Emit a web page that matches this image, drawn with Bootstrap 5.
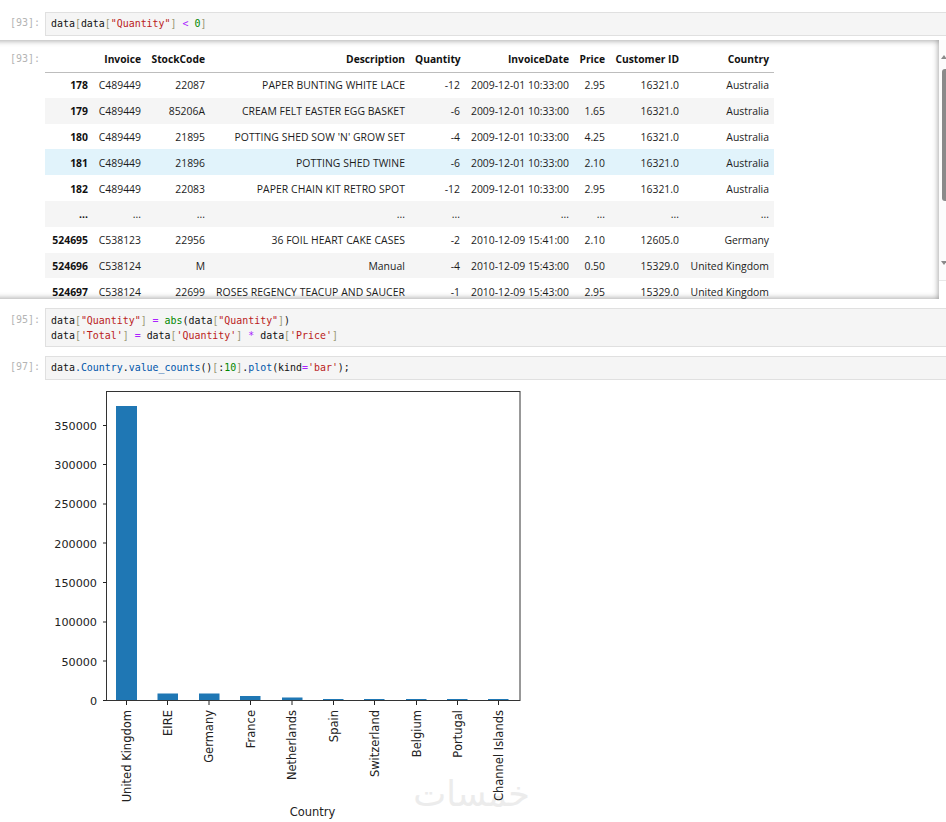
<!DOCTYPE html>
<html lang="en">
<head>
<meta charset="utf-8">
<title>Notebook</title>
<link href="https://cdn.jsdelivr.net/npm/bootstrap@5.3.0/dist/css/bootstrap.min.css" rel="stylesheet">
<style>
html,body{margin:0;height:822px;overflow:hidden;background:#fff}
.nb-page{width:946px;padding-top:12px}
.nb-cell{display:flex;align-items:flex-start}
.nb-prompt{width:45px;flex:none;padding:3px 5px 0 0;text-align:right;font:10px/16px "DejaVu Sans Mono",monospace;color:#b4b4b4;white-space:pre}
.nb-code{flex:1 1 auto;min-width:0;background:#f5f5f5;border:1px solid #e0e0e0;border-right:0;padding:3px 5px;font:9.93px/16px "DejaVu Sans Mono",monospace;color:#111;white-space:pre}
.nb-code-tall{padding:4px 5px 3px;line-height:15px}
.nb-tall-prompt{padding-top:4px}
.nb-mt1{margin-top:9px}
.nb-mt2{margin-top:9px}
.t-str{color:#ba2121}.t-op{color:#a2f}.t-num{color:#080}.t-brk{color:#997}.t-attr{color:#05a}.t-bi{color:#080}
.nb-output{display:flex;margin:4px 0 0 -10px;width:956px;height:259px}
.nb-scroll{width:949px;flex:none;height:259px;overflow:hidden;background:#fff;padding:6px 0 0 55px;position:relative}
.nb-scroll::after{content:"";position:absolute;inset:0;box-shadow:inset 0 0 6px rgba(0,0,0,.45);pointer-events:none}
.nb-scroll .nb-oprompt{position:absolute;left:0;top:8px;width:55px}
.nb-bar{flex:1 1 auto;display:flex;flex-direction:column;align-items:flex-end;height:241px;border-bottom:1px solid #e8e8e8;background:#fcfcfc;position:relative}
.nb-thumb{width:4px;height:132px;margin-top:29px;background:#8a8a8a;border-radius:3px 0 0 3px}
.nb-arrow-up{position:absolute;right:-1px;top:15px;width:0;height:0;border-left:3px solid transparent;border-right:3px solid transparent;border-bottom:4px solid #8a8a8a}
.nb-arrow-down{position:absolute;right:-1px;top:221px;width:0;height:0;border-left:3px solid transparent;border-right:3px solid transparent;border-top:4px solid #8a8a8a}
.nb-table{width:729px;table-layout:fixed;margin:0;font:10.4px/15px "Open Sans",sans-serif;color:#1c1c1c;--bs-table-bg:transparent;border-collapse:collapse}
.nb-table th,.nb-table td{padding:0 5px;text-align:right;white-space:nowrap;border:0;height:26px;overflow:hidden;vertical-align:middle;box-shadow:none}
.nb-table th{font-weight:700;color:#111}
.nb-table thead th{border-bottom:1px solid #bdbdbd;font-size:10.25px;padding-top:1px}
.nb-table tbody td:nth-child(4){letter-spacing:.06px}
.nb-table tr.nb-shade>*{background:#f5f5f5}
.nb-table tr.nb-hover>*{background:#e1f3fb}
.nb-table tr.nb-short>*{height:25px}
.nb-table tr.nb-low>*{padding-top:2px}
.c0{width:48px}.c1{width:53px}.c2{width:64px}.c3{width:200px}.c4{width:55px}.c5{width:109px}.c6{width:36px}.c7{width:74px}.c8{width:90px}
.nb-chart{display:block;margin-top:5px;width:946px;height:442px}
.nb-chart text{font-family:"DejaVu Sans",sans-serif;font-size:11.2px;fill:#222}
.nb-chart .nb-xlabels text{font-size:11.5px}
.nb-chart text.nb-name{font-size:11.5px}
.nb-chart text.nb-wm{font-size:35px;fill:#ececec}
</style>
</head>
<body>
<main class="nb-page">
  <div class="nb-cell">
    <div class="nb-prompt">[93]:</div>
    <div class="nb-code">data<span class="t-brk">[</span>data<span class="t-brk">[</span><span class="t-str">"Quantity"</span><span class="t-brk">]</span> <span class="t-op">&lt;</span> <span class="t-num">0</span><span class="t-brk">]</span></div>
  </div>
  <div class="nb-output">
    <div class="nb-scroll">
      <div class="nb-prompt nb-oprompt">[93]:</div>
      <table class="table nb-table">
        <colgroup><col class="c0"><col class="c1"><col class="c2"><col class="c3"><col class="c4"><col class="c5"><col class="c6"><col class="c7"><col class="c8"></colgroup>
        <thead><tr><th></th><th>Invoice</th><th>StockCode</th><th>Description</th><th>Quantity</th><th>InvoiceDate</th><th>Price</th><th>Customer ID</th><th>Country</th></tr></thead>
        <tbody>
          <tr><th>178</th><td>C489449</td><td>22087</td><td>PAPER BUNTING WHITE LACE</td><td>-12</td><td>2009-12-01 10:33:00</td><td>2.95</td><td>16321.0</td><td>Australia</td></tr>
          <tr class="nb-shade"><th>179</th><td>C489449</td><td>85206A</td><td>CREAM FELT EASTER EGG BASKET</td><td>-6</td><td>2009-12-01 10:33:00</td><td>1.65</td><td>16321.0</td><td>Australia</td></tr>
          <tr class="nb-short nb-low"><th>180</th><td>C489449</td><td>21895</td><td>POTTING SHED SOW 'N' GROW SET</td><td>-4</td><td>2009-12-01 10:33:00</td><td>4.25</td><td>16321.0</td><td>Australia</td></tr>
          <tr class="nb-hover nb-low"><th>181</th><td>C489449</td><td>21896</td><td>POTTING SHED TWINE</td><td>-6</td><td>2009-12-01 10:33:00</td><td>2.10</td><td>16321.0</td><td>Australia</td></tr>
          <tr class="nb-low"><th>182</th><td>C489449</td><td>22083</td><td>PAPER CHAIN KIT RETRO SPOT</td><td>-12</td><td>2009-12-01 10:33:00</td><td>2.95</td><td>16321.0</td><td>Australia</td></tr>
          <tr class="nb-shade"><th>...</th><td>...</td><td>...</td><td>...</td><td>...</td><td>...</td><td>...</td><td>...</td><td>...</td></tr>
          <tr><th>524695</th><td>C538123</td><td>22956</td><td>36 FOIL HEART CAKE CASES</td><td>-2</td><td>2010-12-09 15:41:00</td><td>2.10</td><td>12605.0</td><td>Germany</td></tr>
          <tr class="nb-shade nb-short nb-low"><th>524696</th><td>C538124</td><td>M</td><td>Manual</td><td>-4</td><td>2010-12-09 15:43:00</td><td>0.50</td><td>15329.0</td><td>United Kingdom</td></tr>
          <tr class="nb-low"><th>524697</th><td>C538124</td><td>22699</td><td>ROSES REGENCY TEACUP AND SAUCER</td><td>-1</td><td>2010-12-09 15:43:00</td><td>2.95</td><td>15329.0</td><td>United Kingdom</td></tr>
        </tbody>
      </table>
    </div>
    <div class="nb-bar"><span class="nb-arrow-up"></span><div class="nb-thumb"></div><span class="nb-arrow-down"></span></div>
  </div>
  <div class="nb-cell nb-mt1">
    <div class="nb-prompt nb-tall-prompt">[95]:</div>
    <div class="nb-code nb-code-tall">data<span class="t-brk">[</span><span class="t-str">"Quantity"</span><span class="t-brk">]</span> <span class="t-op">=</span> <span class="t-bi">abs</span>(data<span class="t-brk">[</span><span class="t-str">"Quantity"</span><span class="t-brk">]</span>)
data<span class="t-brk">[</span><span class="t-str">'Total'</span><span class="t-brk">]</span> <span class="t-op">=</span> data<span class="t-brk">[</span><span class="t-str">'Quantity'</span><span class="t-brk">]</span> <span class="t-op">*</span> data<span class="t-brk">[</span><span class="t-str">'Price'</span><span class="t-brk">]</span></div>
  </div>
  <div class="nb-cell nb-mt2">
    <div class="nb-prompt">[97]:</div>
    <div class="nb-code">data<span class="t-attr">.Country</span>.<span class="t-attr">value_counts</span>()<span class="t-brk">[</span>:<span class="t-num">10</span><span class="t-brk">]</span>.<span class="t-attr">plot</span>(kind<span class="t-op">=</span><span class="t-str">'bar'</span>);</div>
  </div>
  <svg class="nb-chart" viewBox="0 385 946 442" role="img" aria-label="Bar chart of the top ten countries">
    <text class="nb-wm" x="530" y="806" text-anchor="start" direction="rtl">خمسات</text>
    <g fill="#1f77b4">
      <rect x="116" y="406" width="21" height="294.5"/>
      <rect x="157.5" y="693.5" width="20.5" height="7"/>
      <rect x="199" y="693.5" width="20.5" height="7"/>
      <rect x="240" y="696" width="20.5" height="4.5"/>
      <rect x="282" y="697.5" width="20.5" height="3"/>
      <rect x="323" y="699" width="20.5" height="1.5"/>
      <rect x="364" y="699" width="20.5" height="1.5"/>
      <rect x="406" y="699" width="20.5" height="1.5"/>
      <rect x="447" y="699" width="20.5" height="1.5"/>
      <rect x="488" y="699" width="20.5" height="1.5"/>
    </g>
    <rect x="106.500" y="391.500" width="413.500" height="309" fill="none" stroke="#333" stroke-width="1"/>
    <g stroke="#222" stroke-width="1">
      <path d="M103 425.500h3.500M103 464.500h3.500M103 504h3.500M103 543h3.500M103 582.500h3.500M103 622h3.500M103 661h3.500M103 700.500h3.500"/>
      <path d="M126.500 701v4M167.500 701v4M209 701v4M250.500 701v4M292 701v4M333.500 701v4M374.500 701v4M416.500 701v4M457.500 701v4M498.500 701v4"/>
    </g>
    <g text-anchor="end">
      <text x="97" y="429.500">350000</text>
      <text x="97" y="469">300000</text>
      <text x="97" y="508">250000</text>
      <text x="97" y="547.500">200000</text>
      <text x="97" y="586.500">150000</text>
      <text x="97" y="626">100000</text>
      <text x="97" y="665.500">50000</text>
      <text x="97" y="705">0</text>
    </g>
    <g class="nb-xlabels" text-anchor="end">
      <text transform="translate(130.500 710) rotate(-90)">United Kingdom</text>
      <text transform="translate(171.500 710) rotate(-90)">EIRE</text>
      <text transform="translate(213 710) rotate(-90)">Germany</text>
      <text transform="translate(254.500 710) rotate(-90)">France</text>
      <text transform="translate(296 710) rotate(-90)">Netherlands</text>
      <text transform="translate(337.500 710) rotate(-90)">Spain</text>
      <text transform="translate(378.500 710) rotate(-90)">Switzerland</text>
      <text transform="translate(420.500 710) rotate(-90)">Belgium</text>
      <text transform="translate(461.500 710) rotate(-90)">Portugal</text>
      <text transform="translate(502.500 710) rotate(-90)">Channel Islands</text>
    </g>
    <text class="nb-name" x="312.500" y="816" text-anchor="middle">Country</text>
  </svg>
</main>
<script src="https://cdn.jsdelivr.net/npm/bootstrap@5.3.0/dist/js/bootstrap.bundle.min.js"></script>
</body>
</html>
